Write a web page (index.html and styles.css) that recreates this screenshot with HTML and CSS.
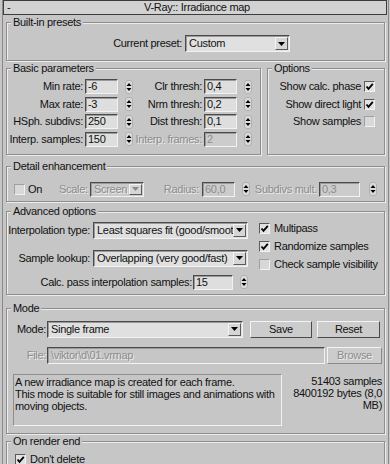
FILE: index.html
```html
<!DOCTYPE html>
<html>
<head>
    <title>V-Ray:: Irradiance map</title>
    <link rel="stylesheet" href="styles.css">
</head>
<body>
    <div class="rollout">
        <div class="rollout-title">
            <span class="collapse">-</span>
            <span class="caption">V-Ray:: Irradiance map</span>
            <span></span>
        </div>

        <div class="group presets">
            <div class="group-title">Built-in presets</div>
            <div class="preset-row">
                <span class="label">Current preset:</span>
                <div class="combo preset-combo">
                    <span class="combo-text">Custom</span>
                    <span class="combo-btn"><svg width="7" height="4" viewBox="0 0 7 4"><path d="M0 0H7L3.5 4Z"/></svg></span>
                </div>
            </div>
        </div>

        <div class="pair">
            <div class="group basic">
                <div class="group-title">Basic parameters</div>
                <div class="basic-grid">
                    <span class="label">Min rate:</span>
                    <div class="field"><span class="num">-6</span><span class="spin"><svg width="8" height="14" viewBox="0 0 8 14"><rect x="0.5" y="0.5" width="7" height="13" rx="2.5" fill="#dadada" stroke="#b0b0b0"/><path d="M4 3L6.5 6H1.5Z M4 11L6.5 8H1.5Z"/></svg></span></div>
                    <span class="label">Clr thresh:</span>
                    <div class="field"><span class="num">0,4</span><span class="spin"><svg width="8" height="14" viewBox="0 0 8 14"><rect x="0.5" y="0.5" width="7" height="13" rx="2.5" fill="#dadada" stroke="#b0b0b0"/><path d="M4 3L6.5 6H1.5Z M4 11L6.5 8H1.5Z"/></svg></span></div>

                    <span class="label">Max rate:</span>
                    <div class="field"><span class="num">-3</span><span class="spin"><svg width="8" height="14" viewBox="0 0 8 14"><rect x="0.5" y="0.5" width="7" height="13" rx="2.5" fill="#dadada" stroke="#b0b0b0"/><path d="M4 3L6.5 6H1.5Z M4 11L6.5 8H1.5Z"/></svg></span></div>
                    <span class="label">Nrm thresh:</span>
                    <div class="field"><span class="num">0,2</span><span class="spin"><svg width="8" height="14" viewBox="0 0 8 14"><rect x="0.5" y="0.5" width="7" height="13" rx="2.5" fill="#dadada" stroke="#b0b0b0"/><path d="M4 3L6.5 6H1.5Z M4 11L6.5 8H1.5Z"/></svg></span></div>

                    <span class="label">HSph. subdivs:</span>
                    <div class="field"><span class="num">250</span><span class="spin"><svg width="8" height="14" viewBox="0 0 8 14"><rect x="0.5" y="0.5" width="7" height="13" rx="2.5" fill="#dadada" stroke="#b0b0b0"/><path d="M4 3L6.5 6H1.5Z M4 11L6.5 8H1.5Z"/></svg></span></div>
                    <span class="label">Dist thresh:</span>
                    <div class="field"><span class="num">0,1</span><span class="spin"><svg width="8" height="14" viewBox="0 0 8 14"><rect x="0.5" y="0.5" width="7" height="13" rx="2.5" fill="#dadada" stroke="#b0b0b0"/><path d="M4 3L6.5 6H1.5Z M4 11L6.5 8H1.5Z"/></svg></span></div>

                    <span class="label">Interp. samples:</span>
                    <div class="field"><span class="num">150</span><span class="spin"><svg width="8" height="14" viewBox="0 0 8 14"><rect x="0.5" y="0.5" width="7" height="13" rx="2.5" fill="#dadada" stroke="#b0b0b0"/><path d="M4 3L6.5 6H1.5Z M4 11L6.5 8H1.5Z"/></svg></span></div>
                    <span class="label disabled">Interp. frames:</span>
                    <div class="field"><span class="num off">2</span><span class="spin"><svg width="8" height="14" viewBox="0 0 8 14"><rect x="0.5" y="0.5" width="7" height="13" rx="2.5" fill="#dadada" stroke="#b0b0b0"/><path d="M4 3L6.5 6H1.5Z M4 11L6.5 8H1.5Z"/></svg></span></div>
                </div>
            </div>

            <div class="group options">
                <div class="group-title">Options</div>
                <div class="option-list">
                    <div class="option"><span>Show calc. phase</span><span class="check"><svg width="9" height="9" viewBox="0 0 9 9"><path d="M1.5 4.5L3.5 6.8L7.8 1.8" fill="none" stroke="#000" stroke-width="1.8"/></svg></span></div>
                    <div class="option"><span>Show direct light</span><span class="check"><svg width="9" height="9" viewBox="0 0 9 9"><path d="M1.5 4.5L3.5 6.8L7.8 1.8" fill="none" stroke="#000" stroke-width="1.8"/></svg></span></div>
                    <div class="option"><span>Show samples</span><span class="check faint"></span></div>
                </div>
            </div>
        </div>

        <div class="group detail">
            <div class="group-title">Detail enhancement</div>
            <div class="detail-row">
                <span class="check faint"></span>
                <span class="on-label">On</span>
                <span class="scale-label disabled">Scale:</span>
                <div class="combo scale-combo off-combo">
                    <span class="combo-text disabled">Screen</span>
                    <span class="combo-btn"><svg width="7" height="4" viewBox="0 0 7 4"><path d="M0 0H7L3.5 4Z" fill="#8a8a8a"/></svg></span>
                </div>
                <span class="radius-label disabled">Radius:</span>
                <div class="field"><span class="num off">60,0</span><span class="spin"><svg width="8" height="14" viewBox="0 0 8 14"><rect x="0.5" y="0.5" width="7" height="13" rx="2.5" fill="#dadada" stroke="#b0b0b0"/><path d="M4 3L6.5 6H1.5Z M4 11L6.5 8H1.5Z"/></svg></span></div>
                <span class="mult-label disabled">Subdivs mult.</span>
                <div class="field wide"><span class="num off">0,3</span><span class="spin"><svg width="8" height="14" viewBox="0 0 8 14"><rect x="0.5" y="0.5" width="7" height="13" rx="2.5" fill="#dadada" stroke="#b0b0b0"/><path d="M4 3L6.5 6H1.5Z M4 11L6.5 8H1.5Z"/></svg></span></div>
            </div>
        </div>

        <div class="group advanced">
            <div class="group-title">Advanced options</div>
            <div class="advanced-body">
                <div class="advanced-grid">
                    <span class="label">Interpolation type:</span>
                    <div class="combo">
                        <span class="combo-text">Least squares fit (good/smooth</span>
                        <span class="combo-btn"><svg width="7" height="4" viewBox="0 0 7 4"><path d="M0 0H7L3.5 4Z"/></svg></span>
                    </div>
                    <span class="label">Sample lookup:</span>
                    <div class="combo">
                        <span class="combo-text">Overlapping (very good/fast)</span>
                        <span class="combo-btn"><svg width="7" height="4" viewBox="0 0 7 4"><path d="M0 0H7L3.5 4Z"/></svg></span>
                    </div>
                    <div class="calc-row">
                        <span class="label">Calc. pass interpolation samples:</span>
                        <div class="field calc"><span class="num">15</span><span class="spin"><svg width="8" height="14" viewBox="0 0 8 14"><rect x="0.5" y="0.5" width="7" height="13" rx="2.5" fill="#dadada" stroke="#b0b0b0"/><path d="M4 3L6.5 6H1.5Z M4 11L6.5 8H1.5Z"/></svg></span></div>
                    </div>
                </div>
                <div class="check-list">
                    <div class="check-item"><span class="check"><svg width="9" height="9" viewBox="0 0 9 9"><path d="M1.5 4.5L3.5 6.8L7.8 1.8" fill="none" stroke="#000" stroke-width="1.8"/></svg></span><span>Multipass</span></div>
                    <div class="check-item"><span class="check"><svg width="9" height="9" viewBox="0 0 9 9"><path d="M1.5 4.5L3.5 6.8L7.8 1.8" fill="none" stroke="#000" stroke-width="1.8"/></svg></span><span>Randomize samples</span></div>
                    <div class="check-item"><span class="check faint"></span><span>Check sample visibility</span></div>
                </div>
            </div>
        </div>

        <div class="group mode">
            <div class="group-title">Mode</div>
            <div class="mode-row">
                <span class="label">Mode:</span>
                <div class="combo mode-combo">
                    <span class="combo-text">Single frame</span>
                    <span class="combo-btn"><svg width="7" height="4" viewBox="0 0 7 4"><path d="M0 0H7L3.5 4Z"/></svg></span>
                </div>
                <span class="button save">Save</span>
                <span class="button reset">Reset</span>
            </div>
            <div class="file-row">
                <span class="label disabled">File:</span>
                <span class="file-input disabled">\viktor\d\01.vrmap</span>
                <span class="button browse disabled">Browse</span>
            </div>
            <div class="info-row">
                <div class="description">A new irradiance map is created for each frame.<br>This mode is suitable for still images and animations with<br>moving objects.</div>
                <div class="stats">51403 samples<br>8400192 bytes (8,0<br>MB)</div>
            </div>
        </div>

        <div class="group render-end">
            <div class="group-title">On render end</div>
            <div class="end-row">
                <span class="check"><svg width="9" height="9" viewBox="0 0 9 9"><path d="M1.5 4.5L3.5 6.8L7.8 1.8" fill="none" stroke="#000" stroke-width="1.8"/></svg></span>
                <span>Don't delete</span>
            </div>
        </div>
    </div>
</body>
</html>
```

FILE: styles.css
```css
body {
    margin: 0;
    background-color: #c6c6c6;
    font-family: "Liberation Sans", Arial, sans-serif;
    font-size: 11px;
    letter-spacing: -0.3px;
    line-height: 13px;
    color: #111;
    overflow: hidden;
}
.rollout {
    width: 387px;
    height: 464px;
    margin-left: 2px;
    box-sizing: border-box;
    border-left: 1px solid #8a8a8a;
    border-right: 1px solid #8a8a8a;
}
.rollout-title {
    height: 15px;
    margin-right: 1px;
    box-sizing: border-box;
    border: 1px solid #3c3c3c;
    background-color: #d2d2d2;
    display: grid;
    grid-template-columns: 14px 1fr 14px;
    align-items: center;
    line-height: 13px;
}
.collapse {
    padding-left: 3px;
}
.caption {
    text-align: center;
    padding-left: 4px;
}
.group {
    margin: 7px 3px 0 3px;
    border: 1px solid #8e8e8e;
    box-shadow: 1px 1px 0 #ececec, inset 1px 1px 0 #ececec;
}
.group-title {
    display: table;
    margin: -7px 0 0 4px;
    padding: 0 2px;
    line-height: 12px;
    background-color: #c6c6c6;
}
.label {
    text-align: right;
    white-space: nowrap;
}
.disabled {
    color: #8c8c8c;
    text-shadow: 1px 1px 0 #ececec;
}

/* controls */
.combo {
    display: flex;
    align-items: center;
    height: 17px;
    box-sizing: border-box;
    border: 1px solid;
    border-color: #4a4a4a #f2f2f2 #f2f2f2 #4a4a4a;
    box-shadow: inset 1px 1px 0 #9a9a9a;
    background-color: #e0e0e0;
    padding-left: 3px;
}
.combo-text {
    flex: 1;
    overflow: hidden;
    white-space: nowrap;
}
.combo-btn {
    width: 13px;
    height: 13px;
    margin-right: 1px;
    box-sizing: border-box;
    border: 1px solid;
    border-color: #f4f4f4 #5a5a5a #5a5a5a #f4f4f4;
    background-color: #d6d6d6;
    display: flex;
    align-items: center;
    justify-content: center;
    flex-shrink: 0;
}
.off-combo {
    background-color: #cacaca;
}
.field {
    display: flex;
    align-items: center;
    justify-content: space-between;
    height: 15px;
}
.num {
    width: 33px;
    height: 15px;
    box-sizing: border-box;
    border: 1px solid;
    border-color: #4a4a4a #f2f2f2 #f2f2f2 #4a4a4a;
    box-shadow: inset 1px 1px 0 #9a9a9a;
    background-color: #dedede;
    padding-left: 2px;
    line-height: 13px;
}
.num.off {
    color: #8c8c8c;
    background-color: #cccccc;
}
.spin {
    display: flex;
}
.check {
    width: 11px;
    height: 11px;
    box-sizing: border-box;
    border: 1px solid;
    border-color: #5a5a5a #f2f2f2 #f2f2f2 #5a5a5a;
    background-color: #e2e2e2;
    display: flex;
    align-items: center;
    justify-content: center;
    flex-shrink: 0;
}
.check.faint {
    border-color: #a0a0a0 #f2f2f2 #f2f2f2 #a0a0a0;
    background-color: #d8d8d8;
}
.button {
    height: 17px;
    box-sizing: border-box;
    border: 1px solid;
    border-color: #f4f4f4 #4a4a4a #4a4a4a #f4f4f4;
    background-color: #cccccc;
    display: flex;
    align-items: center;
    justify-content: center;
}

/* built-in presets */
.presets {
    padding-bottom: 8px;
}
.preset-row {
    display: grid;
    grid-template-columns: 175px 105px;
    column-gap: 3px;
    align-items: center;
    margin-top: 7px;
}

/* basic parameters + options */
.pair {
    display: flex;
    gap: 6px;
    margin: 7px 3px 0 3px;
}
.pair .group {
    margin: 0;
}
.basic {
    width: 255px;
    box-sizing: border-box;
    padding-bottom: 7px;
}
.basic-grid {
    display: grid;
    grid-template-columns: 76px 48px 67px 48px;
    column-gap: 2px;
    row-gap: 2.5px;
    align-items: center;
    margin-top: 5px;
}
.options {
    flex: 1;
}
.option-list {
    display: flex;
    flex-direction: column;
    gap: 2.5px;
    margin-top: 5px;
    padding-right: 9px;
}
.option {
    display: flex;
    justify-content: flex-end;
    align-items: center;
    gap: 3px;
    height: 15px;
}

/* detail enhancement */
.detail {
    margin-top: 11px;
    padding-bottom: 4px;
}
.detail-row {
    display: flex;
    align-items: center;
    height: 15px;
    margin-top: 10px;
    padding-left: 7px;
}
.on-label {
    width: 31px;
    margin-left: 3px;
}
.scale-label {
    width: 31px;
}
.scale-combo {
    width: 54px;
    height: 15px;
}
.scale-combo .combo-btn {
    height: 11px;
}
.radius-label {
    width: 55px;
    text-align: right;
    padding-right: 3px;
}
.detail-row .field {
    width: 48px;
}
.mult-label {
    width: 67px;
    text-align: right;
    padding-right: 2px;
}
.detail-row .field.wide {
    width: 58px;
}
.wide .num {
    width: 41px;
}

/* advanced options */
.advanced {
    margin-top: 9px;
    padding-bottom: 4px;
}
.advanced-body {
    display: flex;
    margin-top: 3px;
}
.advanced-grid {
    display: grid;
    grid-template-columns: 83px 155px;
    grid-template-rows: 17px 11px 17px 8px 15px;
    column-gap: 3px;
    align-items: center;
    margin-top: 2px;
}
.advanced-grid .label:nth-child(3),
.advanced-grid .combo:nth-child(4) {
    grid-row: 3;
}
.calc-row {
    grid-column: 1 / -1;
    grid-row: 5;
    display: flex;
    justify-content: flex-end;
    align-items: center;
    gap: 1px;
}
.field.calc {
    width: 55px;
}
.calc .num {
    width: 40px;
}
.check-list {
    margin-left: 11px;
}
.check-item {
    display: flex;
    align-items: center;
    gap: 4px;
    height: 18px;
}

/* mode */
.mode {
    margin-top: 13px;
    padding-bottom: 7px;
}
.mode-row,
.file-row {
    display: flex;
    align-items: center;
    height: 17px;
    margin-top: 7px;
}
.file-row {
    margin-top: 9px;
}
.mode-row .label,
.file-row .label {
    width: 39px;
    padding-right: 1px;
}
.mode-combo {
    width: 196px;
}
.save {
    width: 62px;
    margin-left: 7px;
}
.reset {
    width: 63px;
    margin-left: 5px;
}
.file-input {
    width: 278px;
    height: 17px;
    box-sizing: border-box;
    border: 1px solid;
    border-color: #4a4a4a #f2f2f2 #f2f2f2 #4a4a4a;
    box-shadow: inset 1px 1px 0 #9a9a9a;
    padding-left: 3px;
    line-height: 15px;
}
.browse {
    width: 55px;
    margin-left: 2px;
    border-color: #f4f4f4 #8a8a8a #8a8a8a #f4f4f4;
}
.info-row {
    display: flex;
    margin-top: 10px;
}
.description {
    width: 269px;
    height: 52px;
    margin-left: 6px;
    box-sizing: border-box;
    border: 1px solid;
    border-color: #8e8e8e #f2f2f2 #f2f2f2 #8e8e8e;
    padding: 1px 0 0 1px;
    line-height: 12px;
}
.stats {
    flex: 1;
    text-align: right;
    padding: 1px 2px 0 0;
    line-height: 12px;
}

/* on render end */
.render-end {
    margin-top: 7px;
    height: 40px;
}
.end-row {
    display: flex;
    align-items: center;
    gap: 4px;
    height: 12px;
    margin-top: 7px;
    padding-left: 8px;
}
```
